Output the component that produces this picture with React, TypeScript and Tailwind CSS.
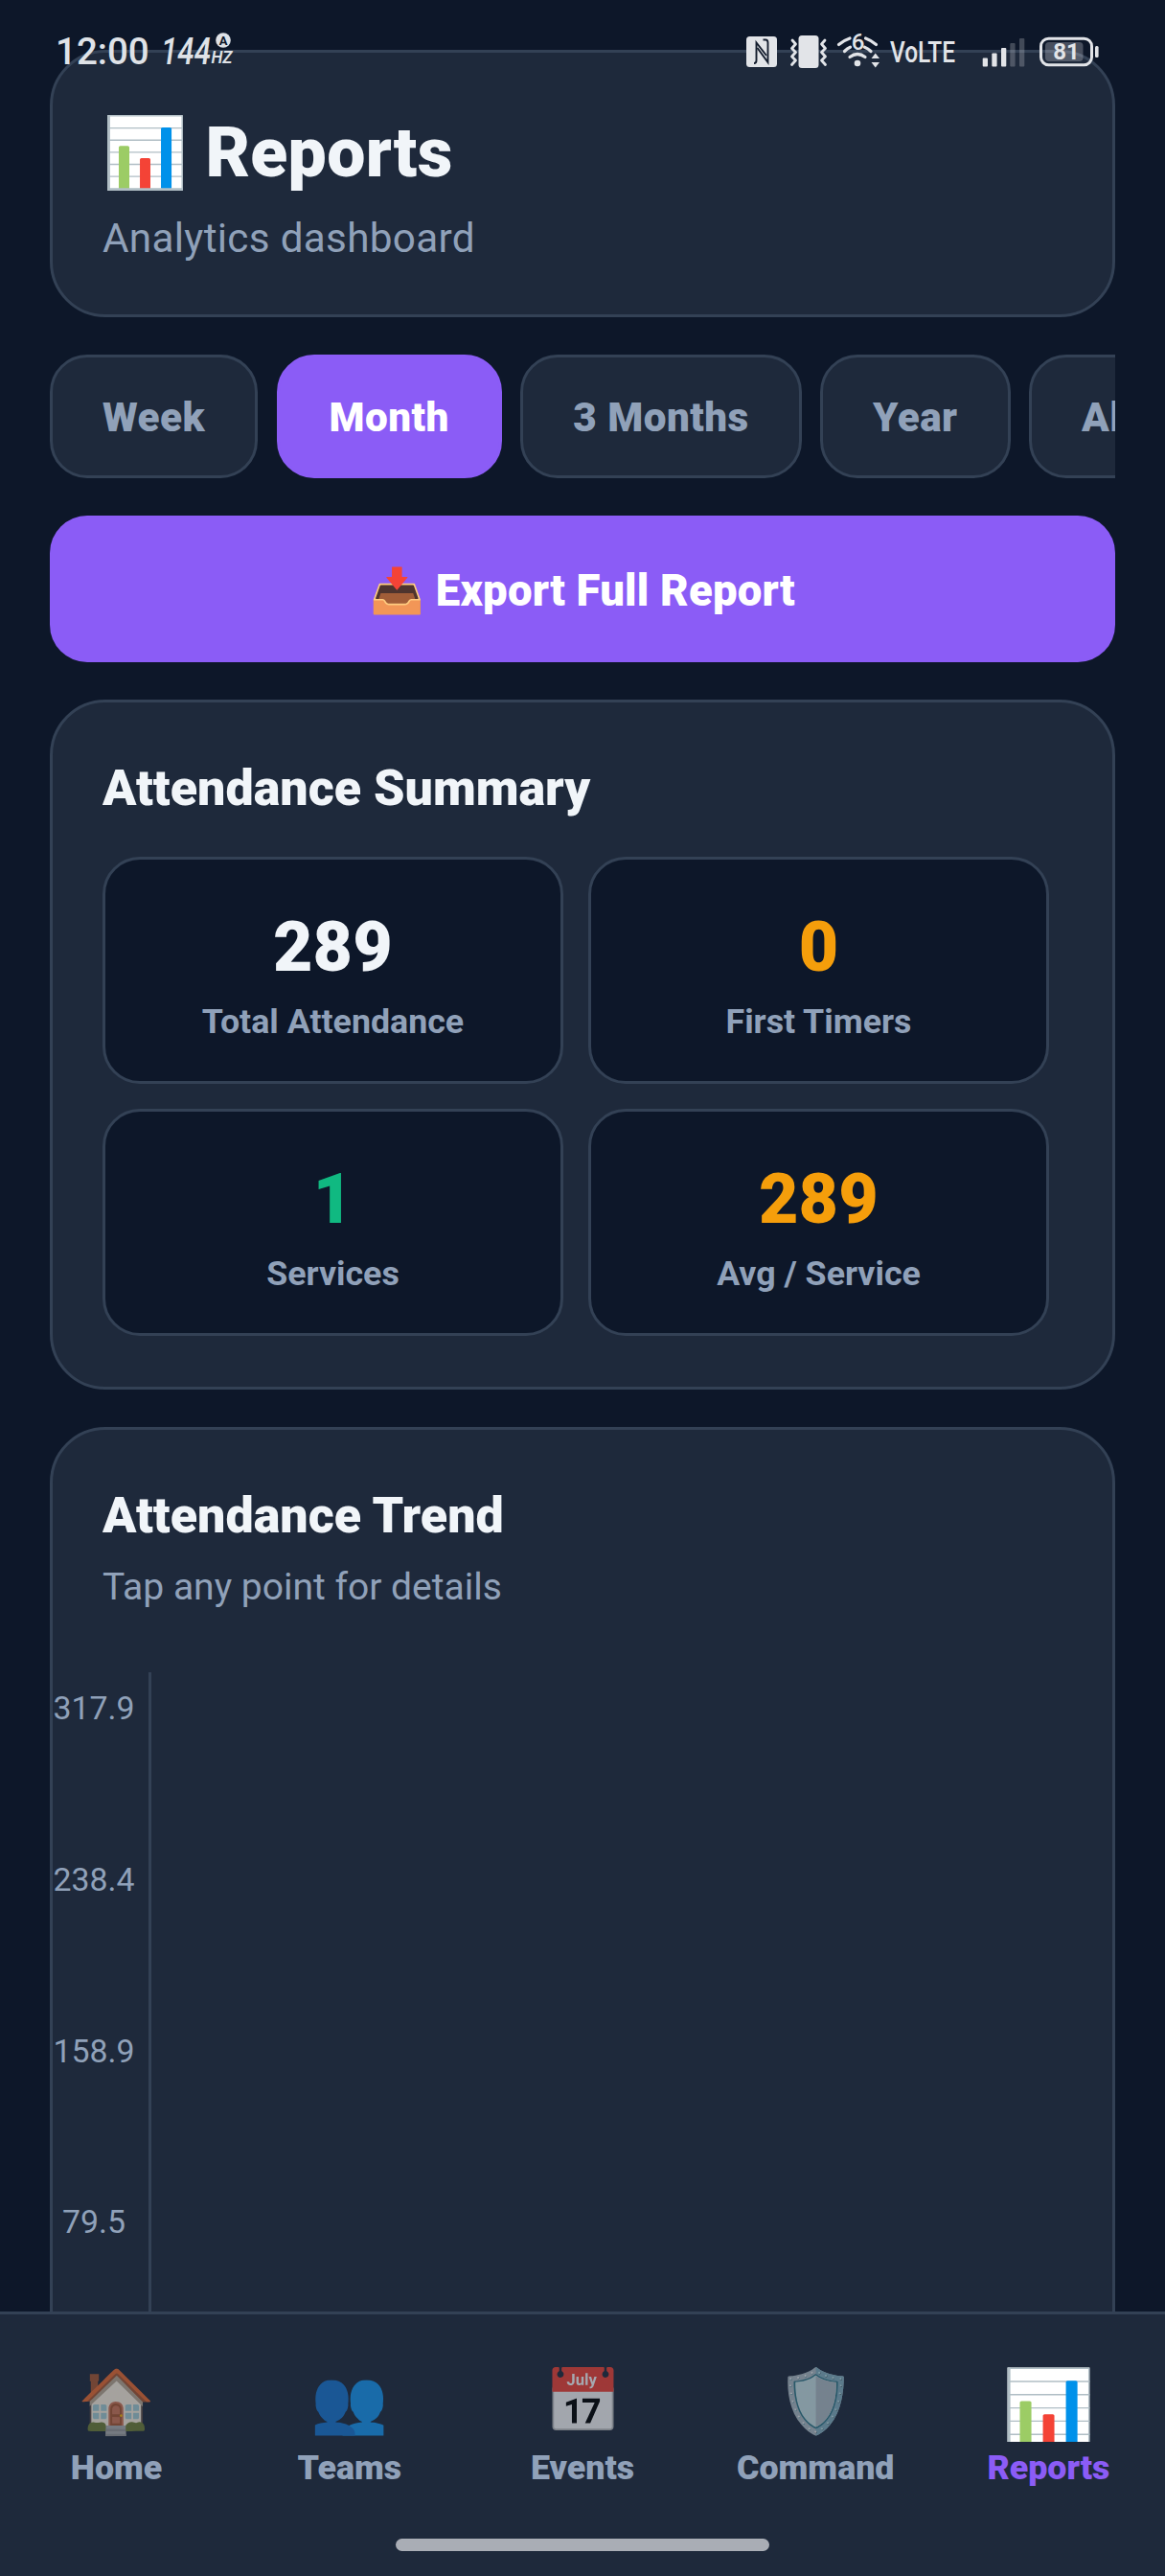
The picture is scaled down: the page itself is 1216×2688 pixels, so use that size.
import { useState } from 'react';

const RANGES = ['Week', 'Month', '3 Months', 'Year', 'All'];

const STATS = [
  { label: 'Total Attendance', value: '289', color: 'text-slate-100' },
  { label: 'First Timers', value: '0', color: 'text-[#f59e0b]' },
  { label: 'Services', value: '1', color: 'text-[#10b981]' },
  { label: 'Avg / Service', value: '289', color: 'text-[#f59e0b]' },
];

const Y_LABELS = ['317.9', '238.4', '158.9', '79.5'];

const TABS = [
  { label: 'Home', icon: '🏠' },
  { label: 'Teams', icon: '👥' },
  { label: 'Events', icon: '📅' },
  { label: 'Command', icon: '🛡️' },
  { label: 'Reports', icon: '📊' },
];

function RefreshRate() {
  return (
    <svg width="80" height="44" viewBox="0 0 80 44" className="overflow-visible fill-[#dfe2e7]">
      <text x="0" y="37" fontSize="38" fontStyle="italic" fontWeight="500" textLength="52" lengthAdjust="spacingAndGlyphs">144</text>
      <circle cx="65" cy="12" r="7.8" />
      <text x="65" y="16.5" fontSize="13" fontWeight="700" textAnchor="middle" className="fill-[#0d1729]">A</text>
      <text x="52.5" y="36" fontSize="19" fontStyle="italic" fontWeight="600" textLength="22" lengthAdjust="spacingAndGlyphs">HZ</text>
    </svg>
  );
}

function StatusIcons() {
  return (
    <svg width="370" height="44" viewBox="0 0 370 44" className="fill-[#e2e4e8]">
      {/* NFC */}
      <rect x="0" y="8" width="32" height="32" rx="3.5" />
      <g fill="none" stroke="#141d2e" strokeWidth="1.9">
        <path d="M8 36c2 0 2.5-1 2.5-3V14.5L21 28" />
        <path d="M17.5 11.5h2.5c2 0 2.5 1 2.5 3V35L11.5 20" />
      </g>

      {/* vibrate */}
      <rect x="54.5" y="7" width="21" height="34" rx="3.5" />
      <g fill="none" stroke="#e2e4e8" strokeWidth="2.8" strokeLinejoin="round" strokeLinecap="round">
        <path d="M48 12l3.5 4-4 4.5 4 4-4 4.5 4 4-4 4.5" />
        <path d="M82 12l-3.5 4 4 4.5-4 4 4 4.5-4 4 4 4.5" />
      </g>

      {/* wifi 6 */}
      <g fill="none" stroke="#e2e4e8" strokeWidth="3.2" strokeLinecap="round">
        <path d="M96.5 16.5Q102 12 108 10" />
        <path d="M124.5 10Q130 12 135.5 16.5" />
        <path d="M102.5 23.5Q105.5 20.5 108.5 19.2" />
        <path d="M123.5 19.2Q127 20.5 130 23.5" />
        <path d="M108 29.5Q116 23.5 124 29.5" />
      </g>
      <circle cx="116" cy="36" r="3.3" />
      <text x="116.5" y="22" fontSize="24" fontWeight="500" textAnchor="middle">6</text>
      <path d="M130.5 31h8.5l-4.25-5.5zM130.5 35h8.5l-4.25 5.5z" />

      <text x="150" y="35" fontSize="31" fontWeight="500" textLength="68" lengthAdjust="spacingAndGlyphs">VoLTE</text>

      {/* signal */}
      <rect x="246.7" y="30.5" width="5.3" height="9" rx="1" />
      <rect x="256.3" y="25.5" width="5.3" height="14" rx="1" />
      <rect x="266" y="20" width="5.3" height="19.5" rx="1" />
      <rect x="275.3" y="15" width="5.3" height="24.5" rx="1" opacity="0.25" />
      <rect x="285" y="10" width="5.3" height="29.5" rx="1" opacity="0.25" />

      {/* battery */}
      <rect x="307.5" y="10.2" width="53" height="27.5" rx="8" fill="none" stroke="#e2e4e8" strokeWidth="3" />
      <rect x="312" y="14" width="39.5" height="20" rx="4" opacity="0.28" />
      <rect x="364" y="18" width="3.6" height="12" rx="1.5" />
      <text x="334" y="32" fontSize="24" fontWeight="700" textAnchor="middle">81</text>
    </svg>
  );
}

export default function App() {
  const [range, setRange] = useState('Month');
  const [tab, setTab] = useState('Reports');

  return (
    <div className="relative flex h-[2688px] w-[1216px] flex-col overflow-hidden bg-[#0d1729] font-['Roboto',sans-serif]">
      {/* System status bar floats over the scrolled page */}
      <div className="absolute inset-x-0 top-0 z-10 flex h-[104px] items-start justify-between pt-[30px] pr-[67px] pl-[58px]">
        <div className="flex gap-3">
          <span className="pt-px text-[38.5px] leading-[46px] font-medium text-[#dfe2e7]">12:00</span>
          <RefreshRate />
        </div>
        <StatusIcons />
      </div>

      <main className="flex min-h-0 flex-1 flex-col gap-[39px] overflow-hidden px-[52px] pt-[52px]">
        <header className="h-[279px] shrink-0 rounded-[58px] border-3 border-[#334155] bg-[#1e293b] p-[52px]">
          <h1 className="text-[71.5px] leading-[105px] font-black tracking-[0.3px] text-slate-100">📊 Reports</h1>
          <p className="mt-3 text-[42.25px] leading-[50px] tracking-[0.3px] text-slate-400">Analytics dashboard</p>
        </header>

        <div className="flex shrink-0 gap-[19.5px] overflow-hidden">
          {RANGES.map(r => (
            <button key={r} onClick={() => setRange(r)}
              className={`h-[129px] shrink-0 rounded-[39px] border-3 px-[52px] pt-[3px] text-[42.25px] font-black tracking-[0.45px] ${range === r ? 'border-[#8b5cf6] bg-[#8b5cf6] text-white' : 'border-[#334155] bg-[#1e293b] text-slate-400'}`}>
              {r}
            </button>
          ))}
        </div>

        <button className="h-[153px] shrink-0 rounded-[39px] bg-[#8b5cf6] pt-[5px] text-[45.5px] font-black tracking-[0.2px] text-white">
          📥 Export Full Report
        </button>

        <section className="h-[720px] shrink-0 rounded-[58px] border-3 border-[#334155] bg-[#1e293b] px-[52px] pt-[59px]">
          <h2 className="text-[52px] leading-[61px] font-black text-slate-100">Attendance Summary</h2>
          <div className="mt-[41px] flex flex-wrap gap-[26px]">
            {STATS.map(s => (
              <div key={s.label} className="flex h-[237px] w-[481px] flex-col items-center rounded-[39px] border-3 border-[#334155] bg-[#0d1729] pt-[50px]">
                <span className={`text-[71.5px] leading-[84px] font-black tracking-[0.3px] ${s.color}`}>{s.value}</span>
                <span className="mt-[14px] text-[35.75px] leading-[42px] font-bold text-slate-400">{s.label}</span>
              </div>
            ))}
          </div>
        </section>

        <section className="h-[1200px] shrink-0 rounded-[58px] border-3 border-[#334155] bg-[#1e293b] pt-[59px]">
          <h2 className="px-[52px] text-[52px] leading-[61px] font-black text-slate-100">Attendance Trend</h2>
          <p className="mt-[21px] px-[52px] text-[39px] leading-[46px] text-slate-400">Tap any point for details</p>
          <div className="mt-[66px] flex gap-[14px]">
            <div className="flex w-[86px] flex-col items-center text-[33.8px] text-slate-400">
              {Y_LABELS.map(v => (
                <span key={v} className="h-[178.75px] pt-[18px] leading-[40px]">{v}</span>
              ))}
            </div>
            <div className="h-[900px] w-[3px] bg-[#334155]" />
          </div>
        </section>
      </main>

      <nav className="flex h-[276px] shrink-0 border-t-3 border-[#334155] bg-[#1e293b] pt-[52px]">
        {TABS.map(t => (
          <button key={t.label} onClick={() => setTab(t.label)} className="flex flex-1 flex-col items-center">
            <span className={`h-[81px] overflow-hidden ${tab === t.label ? 'text-[78px] leading-[93px]' : 'text-[65px] leading-[78px] opacity-60'}`}>{t.icon}</span>
            <span className={`mt-1.5 text-[35.75px] leading-[42px] font-black ${tab === t.label ? 'text-[#8b5cf6]' : 'text-slate-400'}`}>{t.label}</span>
          </button>
        ))}
      </nav>
      <div className="absolute bottom-[26px] left-[413px] h-[13px] w-[390px] rounded-full bg-[#a9adb5]" />
    </div>
  );
}
